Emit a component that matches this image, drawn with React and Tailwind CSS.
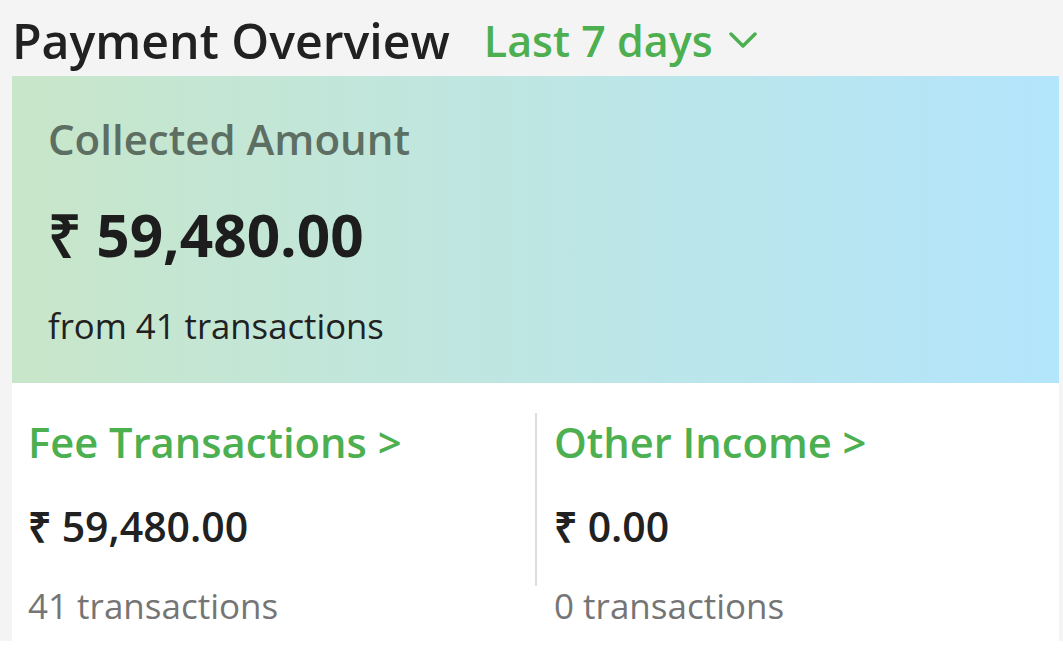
const font = { fontFamily: "'Open Sans', sans-serif" };

const Stat = ({ title, amount, count }) => (
  <div className="flex flex-col">
    <div className="text-[41.7px] font-semibold leading-none text-[#4caf50]">{title} &gt;</div>
    <div className="mt-[43px] text-[41px] font-semibold leading-none text-[#212121]">₹ {amount}</div>
    <div className="mt-[41px] text-[35px] leading-none text-[#757575]">{count} transactions</div>
  </div>
);

export default function App() {
  return (
    <div className="bg-white" style={font}>
      <div className="h-[641px] bg-[#f4f4f4] pl-3 pr-1">
        {/* header */}
        <div className="flex h-[76px] items-center gap-[34px] pt-[5px]">
          <h2 className="text-[48.2px] font-semibold leading-none text-[#212121]">Payment Overview</h2>
          <button className="flex items-center gap-4 text-[43px] font-semibold leading-none text-[#4caf50]">
            Last 7 days
            <svg width="28" height="17" viewBox="0 0 28 17" fill="none" stroke="currentColor" strokeWidth="3.5" strokeLinecap="round" strokeLinejoin="round">
              <polyline points="2,2 14,14 26,2" />
            </svg>
          </button>
        </div>

        {/* collected card */}
        <div className="flex h-[307px] flex-col bg-gradient-to-r from-[#c8e6c9] to-[#b3e5fc] pl-9 pt-[42px]">
          <div className="text-[42px] font-semibold leading-none text-[#5d6e62]">Collected Amount</div>
          <div className="mt-[45px] text-[58.5px] font-bold leading-none text-[#1d1d1d]">₹ 59,480.00</div>
          <div className="mt-[45px] text-[34.7px] leading-none text-[#212121]">from 41 transactions</div>
        </div>

        {/* breakdown */}
        <div className="flex h-[258px] bg-white">
          <div className="w-[523px] pl-4 pt-[38px]">
            <Stat title="Fee Transactions" amount="59,480.00" count="41" />
          </div>
          <div className="mt-[30px] h-[173px] w-[2px] bg-[#dddddd]" />
          <div className="flex-1 pl-[17px] pt-[38px]">
            <Stat title="Other Income" amount="0.00" count="0" />
          </div>
        </div>
      </div>
    </div>
  );
}
